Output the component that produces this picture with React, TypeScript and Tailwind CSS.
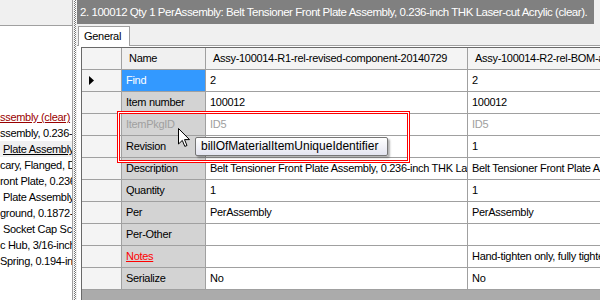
import React from 'react';

type Row = {
  label: string;
  v1: string;
  v2: string;
  selected?: boolean;
  dim?: boolean;
  link?: boolean;
};

const rows: Row[] = [
  { label: 'Find', v1: '2', v2: '2', selected: true },
  { label: 'Item number', v1: '100012', v2: '100012' },
  { label: 'ItemPkgID', v1: 'ID5', v2: 'ID5', dim: true },
  { label: 'Revision', v1: '1', v2: '1' },
  {
    label: 'Description',
    v1: 'Belt Tensioner Front Plate Assembly, 0.236-inch THK Laser-cut Acrylic (clear)',
    v2: 'Belt Tensioner Front Plate Assembly, 0.236-inch THK Laser-cut Acrylic (clear)',
  },
  { label: 'Quantity', v1: '1', v2: '1' },
  { label: 'Per', v1: 'PerAssembly', v2: 'PerAssembly' },
  { label: 'Per-Other', v1: '', v2: '' },
  { label: 'Notes', v1: '', v2: 'Hand-tighten only, fully tighten after alignment', link: true },
  { label: 'Serialize', v1: 'No', v2: 'No' },
];

// visible slices of the tree on the left (scrolled sideways)
const tree = [
  { t: 'ssembly (clear)', cls: 'text-[#990000] underline' },
  { t: 'ssembly, 0.236-inch THK', cls: '' },
  { t: 'Plate Assembly', cls: 'underline pl-[3px] bg-[#f0f0f0]' },
  { t: 'cary, Flanged, D', cls: '' },
  { t: 'ront Plate, 0.236', cls: '' },
  { t: 'Plate Assembly', cls: 'pl-[3px]' },
  { t: 'ground, 0.1872-inch', cls: '' },
  { t: 'Socket Cap Screw', cls: 'pl-[3px]' },
  { t: 'c Hub,  3/16-inch', cls: '' },
  { t: 'Spring, 0.194-inch', cls: '' },
];

function Arrow() {
  return (
    <svg width="12" height="20" viewBox="0 0 12 20" className="absolute left-[178px] top-[128px]">
      <path d="M0.5 0.5 L0.5 16 L4.3 12.4 L6.8 18.4 L9 17.5 L6.5 11.6 L11.5 11.6 Z" fill="#fff" stroke="#000" strokeWidth="1" />
    </svg>
  );
}

export default function App() {
  return (
    <div className="relative w-[600px] h-[300px] overflow-hidden flex bg-[#f0f0f0] text-[11px] tracking-[-0.3px] text-black font-['Liberation_Sans',Arial,sans-serif]">
      {/* left tree panel */}
      <div className="w-[73px] h-full flex flex-col bg-white border-r border-[#a0a0a0] overflow-hidden">
        <div className="h-[26px] bg-[#f0f0f0] border-b border-[#a0a0a0] shrink-0" />
        <div className="pt-[83px] flex flex-col">
          {tree.map((l, i) => (
            <div key={i} className={`h-[16px] leading-[16px] whitespace-nowrap ${l.cls}`}>
              {l.t}
            </div>
          ))}
        </div>
      </div>

      {/* splitter */}
      <div className="w-[4px] h-full pl-[1px]">
        <div className="w-[2px] h-full bg-[conic-gradient(#777_25%,#fff_0_50%,#777_0_75%,#fff_0)] bg-[length:2px_2px]" />
      </div>

      {/* right detail panel */}
      <div className="flex-1 min-w-0 h-full flex flex-col">
        <div className="h-[24px] mr-[6px] bg-[#808080] text-white text-[11.5px] tracking-[-0.45px] pl-[3px] leading-[24px] whitespace-nowrap overflow-hidden shrink-0">
          2. 100012 Qty 1 PerAssembly: Belt Tensioner Front Plate Assembly, 0.236-inch THK Laser-cut Acrylic (clear).
        </div>

        <div className="h-[22px] flex items-end border-b border-[#a0a0a0] shrink-0">
          <div className="ml-[1px] w-[52px] h-[20px] bg-white border border-b-0 border-[#a0a0a0] pl-[5px] leading-[19px] -mb-px relative">
            General
          </div>
        </div>

        <div className="flex-1 bg-white pl-[4px] pt-[1px] flex flex-col min-h-0">
          <div className="flex-1 bg-[#ababab] border-l border-t border-[#696969] overflow-hidden">
            <div className="grid grid-cols-[40px_84px_262px_260px] w-max">
              {/* header row */}
              <div className="h-[22px] bg-[#f4f4f4] border-r border-b border-[#a0a0a0]" />
              <div className="h-[22px] bg-[#f0f0f0] border-r border-b border-[#a0a0a0] pl-[7px] leading-[21px]">Name</div>
              <div className="h-[22px] bg-[#f4f4f4] border-r border-b border-[#a0a0a0] pl-[7px] leading-[21px] whitespace-nowrap overflow-hidden">
                Assy-100014-R1-rel-revised-component-20140729
              </div>
              <div className="h-[22px] bg-[#f4f4f4] border-b border-[#a0a0a0] pl-[7px] leading-[21px] whitespace-nowrap overflow-hidden">
                Assy-100014-R2-rel-BOM-alignment-20140812
              </div>

              {rows.map((r) => (
                <React.Fragment key={r.label}>
                  <div className="h-[22px] bg-[#f4f4f4] border-r border-b border-[#a0a0a0] flex items-center pl-[7px]">
                    {r.selected && (
                      <svg width="5" height="9" viewBox="0 0 5 9">
                        <path d="M0 0 L5 4.5 L0 9 Z" fill="#000" />
                      </svg>
                    )}
                  </div>
                  <div
                    className={`h-[22px] border-r border-b border-[#a0a0a0] pl-[4px] leading-[21px] whitespace-nowrap overflow-hidden ${
                      r.selected ? 'bg-[#3399ff] text-white' : 'bg-[#d3d3d3]'
                    } ${r.dim ? 'text-[#a0a0a0]' : ''} ${r.link ? 'text-[#ff0000] underline' : ''}`}
                  >
                    {r.label}
                  </div>
                  <div
                    className={`h-[22px] bg-white border-r border-b border-[#a0a0a0] pl-[4px] leading-[21px] whitespace-nowrap overflow-hidden ${
                      r.dim ? 'text-[#a0a0a0]' : ''
                    }`}
                  >
                    {r.v1}
                  </div>
                  <div
                    className={`h-[22px] bg-white border-b border-[#a0a0a0] pl-[4px] leading-[21px] whitespace-nowrap overflow-hidden ${
                      r.dim ? 'text-[#a0a0a0]' : ''
                    }`}
                  >
                    {r.v2}
                  </div>
                </React.Fragment>
              ))}
            </div>
          </div>
        </div>
      </div>

      {/* red double highlight */}
      <div className="absolute left-[117px] top-[111px] w-[293px] h-[52px] border border-[#ff0000]">
        <div className="w-full h-full border border-white">
          <div className="w-full h-full border border-[#ff0000]" />
        </div>
      </div>

      {/* tooltip */}
      <div className="absolute left-[195px] top-[137px] w-[193px] h-[19px] rounded-[2px] border border-[#767676] bg-linear-to-b from-white to-[#e4e5f0] shadow-[2px_2px_2px_rgba(0,0,0,0.3)] pl-[5px] text-[12px] tracking-normal leading-[17px] whitespace-nowrap">
        billOfMaterialItemUniqueIdentifier
      </div>

      <Arrow />
    </div>
  );
}
